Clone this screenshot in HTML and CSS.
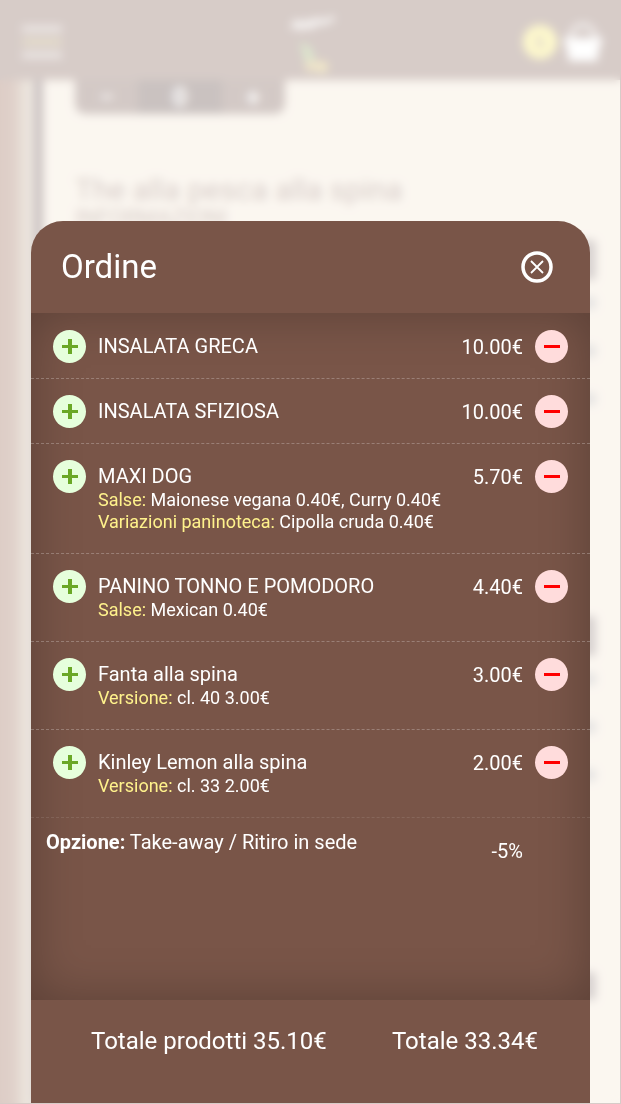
FILE: index.html
```html
<!DOCTYPE html>
<html lang="it">

<head>
    <meta charset="UTF-8">
    <meta name="viewport" content="width=device-width, initial-scale=1.0">
    <title>Ordine</title>
    <link rel="stylesheet" href="styles.css">
</head>

<body>

    <div class="page">
        <header class="topbar">
            <button type="button" class="menu-btn" aria-label="Menu">
                <span class="menu-bar"></span>
                <span class="menu-bar menu-bar-yellow"></span>
                <span class="menu-bar"></span>
            </button>
            <svg class="logo" width="60" height="64" viewBox="0 0 60 64">
                <path d="M9 18 L14 12 L18 18 L24 12 L28 17 L33 10 L38 13 L51 8" fill="none" stroke="#fff" stroke-width="4" />
                <path d="M17 32 L27 37 L32 50 L23 53 Z" fill="#8bb25a" />
                <circle cx="28" cy="56" r="6" fill="#c9a64b" />
                <circle cx="39" cy="57" r="6" fill="#d9b94b" />
            </svg>
            <div class="cart">
                <span class="cart-count">6</span>
                <svg width="40" height="42" viewBox="0 0 40 42">
                    <path d="M7 19 C8 -1 32 -1 33 19" fill="none" stroke="#fff" stroke-width="3" />
                    <path d="M1 17 H39 V23 H37 L34 40 H6 L3 23 H1 Z" fill="#fff" />
                </svg>
            </div>
        </header>
        <main class="menu">
            <div class="menu-edge"></div>
            <div class="menu-line"></div>
            <div class="menu-list">
                <div class="quantity">
                    <span>−</span>
                    <span class="quantity-value">0</span>
                    <span>+</span>
                </div>
                <h2 class="product-name">The alla pesca alla spina</h2>
                <p class="product-note">INFORMAZIONI</p>
            </div>
            <div class="product-side">
                <i class="tab"></i><i class="dot"></i><i class="dot"></i><i class="dot"></i>
                <i class="tab tab-next"></i><i class="dot"></i><i class="dot"></i><i class="dot"></i>
                <i class="tab tab-last"></i>
            </div>
        </main>
    </div>

    <div class="overlay">
        <section class="order" role="dialog" aria-labelledby="order-title">
            <div class="order-header">
                <h1 id="order-title">Ordine</h1>
                <button type="button" class="close-btn" aria-label="Chiudi">
                    <svg width="32" height="32" viewBox="0 0 32 32">
                        <circle cx="16" cy="16" r="14" fill="none" stroke="#fff" stroke-width="3.5" />
                        <path d="M10 10 L22 22 M22 10 L10 22" stroke="#fff" stroke-width="1.8" />
                    </svg>
                </button>
            </div>

            <div class="order-body">
                <ul class="items">
                    <li class="item">
                        <button type="button" class="round-btn add" aria-label="Aggiungi"></button>
                        <div class="item-text">
                            <p class="item-name">INSALATA GRECA</p>
                        </div>
                        <span class="price">10.00€</span>
                        <button type="button" class="round-btn remove" aria-label="Rimuovi"></button>
                    </li>
                    <li class="item">
                        <button type="button" class="round-btn add" aria-label="Aggiungi"></button>
                        <div class="item-text">
                            <p class="item-name">INSALATA SFIZIOSA</p>
                        </div>
                        <span class="price">10.00€</span>
                        <button type="button" class="round-btn remove" aria-label="Rimuovi"></button>
                    </li>
                    <li class="item">
                        <button type="button" class="round-btn add" aria-label="Aggiungi"></button>
                        <div class="item-text">
                            <p class="item-name">MAXI DOG</p>
                            <div class="extras">
                                <p><span>Salse:</span> Maionese vegana 0.40€, Curry 0.40€</p>
                                <p><span>Variazioni paninoteca:</span> Cipolla cruda 0.40€</p>
                            </div>
                        </div>
                        <span class="price">5.70€</span>
                        <button type="button" class="round-btn remove" aria-label="Rimuovi"></button>
                    </li>
                    <li class="item">
                        <button type="button" class="round-btn add" aria-label="Aggiungi"></button>
                        <div class="item-text">
                            <p class="item-name">PANINO TONNO E POMODORO</p>
                            <div class="extras">
                                <p><span>Salse:</span> Mexican 0.40€</p>
                            </div>
                        </div>
                        <span class="price">4.40€</span>
                        <button type="button" class="round-btn remove" aria-label="Rimuovi"></button>
                    </li>
                    <li class="item">
                        <button type="button" class="round-btn add" aria-label="Aggiungi"></button>
                        <div class="item-text">
                            <p class="item-name">Fanta alla spina</p>
                            <div class="extras">
                                <p><span>Versione:</span> cl. 40 3.00€</p>
                            </div>
                        </div>
                        <span class="price">3.00€</span>
                        <button type="button" class="round-btn remove" aria-label="Rimuovi"></button>
                    </li>
                    <li class="item">
                        <button type="button" class="round-btn add" aria-label="Aggiungi"></button>
                        <div class="item-text">
                            <p class="item-name">Kinley Lemon alla spina</p>
                            <div class="extras">
                                <p><span>Versione:</span> cl. 33 2.00€</p>
                            </div>
                        </div>
                        <span class="price">2.00€</span>
                        <button type="button" class="round-btn remove" aria-label="Rimuovi"></button>
                    </li>
                </ul>
                <div class="option">
                    <p><b>Opzione:</b> Take-away / Ritiro in sede</p>
                    <span class="price">-5%</span>
                </div>
            </div>

            <div class="order-footer">
                <span>Totale prodotti 35.10€</span>
                <span>Totale 33.34€</span>
            </div>
        </section>
    </div>

</body>

</html>
```
FILE: styles.css
```css
* {
    box-sizing: border-box;
}

body {
    margin: 0;
    font-family: Roboto, sans-serif;
    color: #fff;
    background-color: #f2e3ce;
}

h1, h2, p, ul {
    margin: 0;
    padding: 0;
    font-weight: normal;
}

ul {
    list-style: none;
}

button {
    padding: 0;
    border: none;
    background: none;
    cursor: pointer;
}

/* Menu page */

.page {
    display: flex;
    flex-direction: column;
    height: 100vh;
    overflow: hidden;
}

.topbar {
    display: grid;
    grid-template-columns: 1fr auto 1fr;
    align-items: center;
    flex: none;
    height: 80px;
    padding: 4px 18px 0 22px;
    background-color: #795548;
}

.menu-btn {
    display: flex;
    flex-direction: column;
    gap: 7px;
    width: 40px;
}

.menu-bar {
    height: 6px;
    background-color: #c8b8b2;
}

.menu-bar-yellow {
    background-color: #b39a5a;
}

.cart {
    display: flex;
    align-items: center;
    justify-content: flex-end;
    gap: 6px;
}

.cart-count {
    width: 34px;
    line-height: 34px;
    border-radius: 50%;
    background-color: #ffee58;
    color: #795548;
    text-align: center;
    font-size: 20px;
}

.menu {
    display: flex;
    flex: 1;
}

.menu-edge {
    width: 34px;
    background: linear-gradient(90deg, #8c5640 0, #96664f 14px, #b9a086 24px, #c9b8a0 34px);
}

.menu-line {
    width: 9px;
    background-color: #4d3030;
}

.menu-list {
    flex: 1;
    padding-left: 32px;
    color: #795548;
}

.quantity {
    display: flex;
    width: 210px;
    border-radius: 0 0 10px 10px;
    background-color: #6d4c41;
    color: #fff;
    font-size: 26px;
    line-height: 34px;
    font-weight: bold;
}

.quantity span {
    flex: 1;
    text-align: center;
}

.quantity .quantity-value {
    flex: 1 1 20px;
    background-color: #4e342e;
}

.product-name {
    margin-top: 60px;
    font-size: 30px;
    line-height: 32px;
}

.product-note {
    font-size: 22px;
    line-height: 24px;
}

.product-side {
    display: flex;
    flex-direction: column;
    align-items: flex-end;
    gap: 34px;
    padding: 160px 25px 0 0;
}

.tab {
    width: 40px;
    height: 40px;
    border-radius: 4px;
    background-color: #7d6a65;
}

.dot {
    width: 40px;
    height: 12px;
    margin-top: -17px;
    background-color: #a9a4a0;
}

.dot + .dot {
    margin-top: 2px;
}

.tab-next {
    margin-top: 177px;
}

.tab-last {
    height: 28px;
    margin-top: 157px;
}

/* Order window */

.overlay {
    position: fixed;
    inset: 0;
    display: flex;
    padding: 20vh 30px 0 31px;
    border: solid #d7ccc8;
    border-width: 0 1px 1px 0;
    background-color: rgba(255, 255, 255, 0.7);
    backdrop-filter: blur(5px);
}

.order {
    display: flex;
    flex-direction: column;
    flex: 1;
    border-radius: 32px 32px 0 0;
    background-color: #795548;
    overflow: hidden;
}

.order-header {
    display: flex;
    align-items: center;
    justify-content: space-between;
    padding: 26px 37px 26px 30px;
}

.order-header h1 {
    font-size: 33px;
    line-height: 40px;
}

.close-btn {
    display: flex;
}

.order-body {
    flex: 1;
    overflow-y: auto;
    box-shadow: inset 0 0 50px rgba(0, 0, 0, 0.25);
}

.item {
    display: flex;
    gap: 12px;
    padding: 16px 22px 15px;
    border-top: 1px dashed rgba(255, 255, 255, 0.25);
}

.item:first-child {
    border-top-color: transparent;
}

.item-text {
    flex: 1;
    padding: 4px 0 5px;
}

.item-name,
.price,
.option {
    font-size: 20px;
    line-height: 24px;
}

.extras {
    padding-top: 1px;
    font-size: 18px;
    line-height: 22px;
}

.extras span {
    color: #fff28c;
}

.price {
    padding-top: 5px;
}

.round-btn {
    display: grid;
    place-items: center;
    flex: none;
    width: 33px;
    height: 33px;
    border-radius: 50%;
}

.round-btn::before,
.round-btn::after {
    content: "";
    grid-area: 1 / 1;
    width: 16px;
    height: 3px;
}

.add {
    background-color: #e6ffdc;
}

.add::before,
.add::after {
    background-color: #6aa826;
}

.add::after {
    width: 4px;
    height: 15px;
}

.remove {
    background-color: #ffdcdc;
}

.remove::before {
    background-color: #f00;
}

.remove::after {
    display: none;
}

.option {
    display: flex;
    justify-content: space-between;
    padding: 12px 67px 12px 15px;
    border-top: 1px dashed rgba(255, 255, 255, 0.1);
}

.option .price {
    padding-top: 9px;
}

.order-footer {
    display: flex;
    justify-content: space-between;
    padding: 25px 52px 46px 60px;
    font-size: 24px;
    line-height: 32px;
}
```
